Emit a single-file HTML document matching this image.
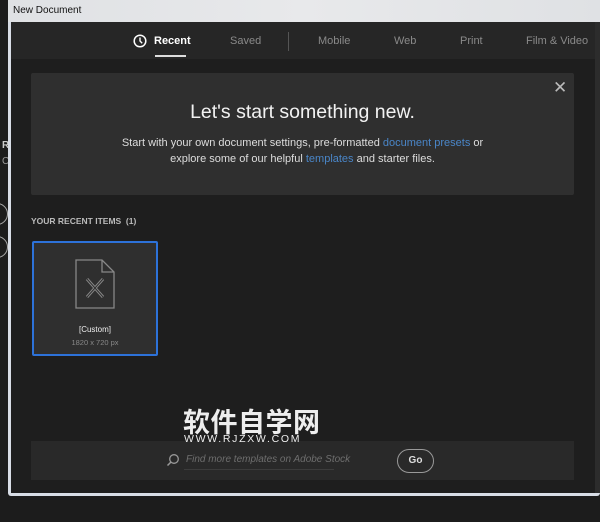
<!DOCTYPE html><html><head><style>
*{margin:0;padding:0;box-sizing:border-box}
body{width:600px;height:522px;background:#1c1c1c;position:relative;overflow:hidden;font-family:"Liberation Sans",sans-serif}
.a{position:absolute}
</style></head><body>
<div class="a" style="left:2px;top:140px;color:#ccc;font-size:10px;font-weight:bold">R</div>
<div class="a" style="left:2px;top:156px;color:#999;font-size:10px">C</div>
<div class="a" style="left:-14px;top:203px;width:22px;height:22px;border:1px solid #aaa;border-radius:50%"></div>
<div class="a" style="left:-14px;top:236px;width:22px;height:22px;border:1px solid #aaa;border-radius:50%"></div>
<div class="a" style="left:8px;top:0;width:592px;height:496px;background:#d8dde6;border-radius:3px"></div>
<div class="a" style="left:8px;top:0;width:592px;height:22px;background:linear-gradient(90deg,#dfe1e4,#e8e9eb,#dfe1e4)"></div>
<div class="a" style="left:13px;top:5px;font-size:10px;color:#111">New Document</div>
<div class="a" style="left:11px;top:22px;width:589px;height:471px;background:#1e1e1e"></div>
<div class="a" style="left:11px;top:22px;width:584px;height:37px;background:#262626"></div>
<div class="a" style="left:595px;top:22px;width:5px;height:471px;background:#2c2c2c"></div>
<svg class="a" style="left:133px;top:34px" width="14" height="14" viewBox="0 0 14 14"><circle cx="7" cy="7" r="5.8" fill="none" stroke="#fff" stroke-width="1.5"/><path d="M7 3.5V7l2.2 2.2" fill="none" stroke="#fff" stroke-width="1.4"/></svg>
<div class="a" style="left:154px;top:35px;font-size:11px;color:#fff;font-weight:bold">Recent</div>
<div class="a" style="left:155px;top:55px;width:31px;height:2px;background:#ddd"></div>
<div class="a" style="left:230px;top:35px;font-size:11px;color:#8a8a8a">Saved</div>
<div class="a" style="left:288px;top:32px;width:1px;height:19px;background:#555"></div>
<div class="a" style="left:318px;top:35px;font-size:11px;color:#8a8a8a">Mobile</div>
<div class="a" style="left:394px;top:35px;font-size:11px;color:#8a8a8a">Web</div>
<div class="a" style="left:460px;top:35px;font-size:11px;color:#8a8a8a">Print</div>
<div class="a" style="left:526px;top:35px;font-size:11px;color:#8a8a8a">Film &amp; Video</div>
<div class="a" style="left:31px;top:73px;width:543px;height:122px;background:#2f2f2f;border-radius:2px"></div>
<div class="a" style="left:553px;top:78px;font-size:17px;color:#bbb">✕</div>
<div class="a" style="left:31px;top:101px;width:543px;text-align:center;font-size:19.5px;color:#f2f2f2">Let's start something new.</div>
<div class="a" style="left:31px;top:135px;width:543px;text-align:center;font-size:11px;line-height:16px;color:#ddd">Start with your own document settings, pre-formatted <span style="color:#4a86c8">document presets</span> or<br>explore some of our helpful <span style="color:#4a86c8">templates</span> and starter files.</div>
<div class="a" style="left:31px;top:216px;font-size:8.5px;font-weight:bold;color:#bbb">YOUR RECENT ITEMS &nbsp;(1)</div>
<div class="a" style="left:32px;top:241px;width:126px;height:115px;background:#2f2f2f;border:2px solid #2d72d9;border-radius:2px"></div>
<svg class="a" style="left:75px;top:259px" width="40" height="50" viewBox="0 0 40 50"><path d="M1 1H27L39 13V49H1Z M27 1V13H39" fill="none" stroke="#888" stroke-width="1.3"/><path d="M12 20L28 38M28 20L12 38" stroke="#888" stroke-width="3" fill="none"/><path d="M12 20L28 38M28 20L12 38" stroke="#2f2f2f" stroke-width="1" fill="none"/></svg>
<div class="a" style="left:32px;top:325px;width:126px;text-align:center;font-size:8px;color:#eee">[Custom]</div>
<div class="a" style="left:32px;top:338px;width:126px;text-align:center;font-size:7.5px;color:#888">1820 x 720 px</div>
<div class="a" style="left:31px;top:441px;width:543px;height:39px;background:#292929"></div>
<svg class="a" style="left:166px;top:453px" width="14" height="14" viewBox="0 0 14 14"><circle cx="8" cy="6" r="4.3" fill="none" stroke="#999" stroke-width="1.3"/><path d="M5 9L1.5 12.5" stroke="#999" stroke-width="1.5"/></svg>
<div class="a" style="left:186px;top:454px;font-size:10px;font-style:italic;color:#6e6e6e">Find more templates on Adobe Stock</div>
<div class="a" style="left:184px;top:469px;width:150px;height:1px;background:#3c3c3c"></div>
<div class="a" style="left:397px;top:449px;width:37px;height:24px;border:1.5px solid #999;border-radius:12px;color:#ddd;font-size:10px;font-weight:bold;text-align:center;line-height:21px">Go</div>
<div class="a" style="left:183px;top:406px;font-family:'Noto Sans CJK SC',sans-serif;font-weight:bold;font-size:27px;line-height:30px;color:#eee;letter-spacing:0.5px">软件自学网</div>
<div class="a" style="left:184px;top:433px;font-size:10.5px;color:#eee;letter-spacing:1.7px">WWW.RJZXW.COM</div>
</body></html>
